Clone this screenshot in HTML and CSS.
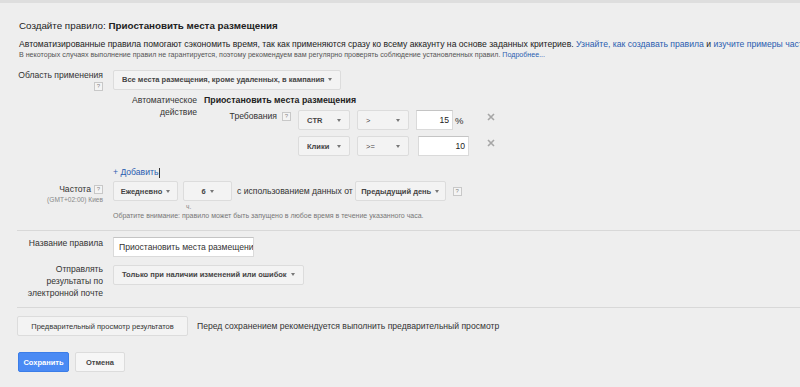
FILE: index.html
```html
<!DOCTYPE html>
<html lang="ru">
<head>
<meta charset="utf-8">
<link rel="stylesheet" href="styles.css">
</head>
<body>
<div class="page">
  <h1 class="title">Создайте правило: <b>Приостановить места размещения</b></h1>
  <p class="intro">Автоматизированные правила помогают сэкономить время, так как применяются сразу ко всему аккаунту на основе заданных критериев. <a>Узнайте, как создавать правила</a> и <a>изучите примеры часто используемых правил</a>.</p>
  <p class="note">В некоторых случаях выполнение правил не гарантируется, поэтому рекомендуем вам регулярно проверять соблюдение установленных правил. <a>Подробнее...</a></p>

  <div class="row scope">
    <div class="label">Область применения<span class="help">?</span></div>
    <div class="content">
      <span class="btn">Все места размещения, кроме удаленных, в кампания <i class="caret"></i></span>
    </div>
  </div>

  <div class="action">
    <div class="alabel">Автоматическое<br>действие</div>
    <div class="acontent">
      <div class="aname">Приостановить места размещения</div>
      <div class="reqs">
        <div class="rlabel">Требования<span class="help">?</span></div>
        <div class="rlist">
          <div class="cond">
            <span class="btn sel1">CTR <i class="caret"></i></span>
            <span class="btn sel2">&gt; <i class="caret"></i></span>
            <span class="input num short">15</span><span class="pct">%</span>
            <svg class="x" width="8" height="8" viewBox="0 0 8 8"><path d="M1 1L7 7M7 1L1 7" stroke="#a6a6a6" stroke-width="1.6"/></svg>
          </div>
          <div class="cond">
            <span class="btn sel1">Клики <i class="caret"></i></span>
            <span class="btn sel2">&gt;= <i class="caret"></i></span>
            <span class="input num long">10</span>
            <svg class="x" width="8" height="8" viewBox="0 0 8 8"><path d="M1 1L7 7M7 1L1 7" stroke="#a6a6a6" stroke-width="1.6"/></svg>
          </div>
        </div>
      </div>
    </div>
  </div>

  <div class="add"><a>+ Добавить</a><span class="cursor"></span></div>

  <div class="row freq">
    <div class="label"><span>Частота<span class="help inline">?</span></span><span class="tz">(GMT+02:00) Киев</span></div>
    <div class="content">
      <div class="freqline">
        <span class="btn daily">Ежедневно <i class="caret"></i></span>
        <span class="hourcol"><span class="btn hour">6 <i class="caret"></i></span><span class="hunit">ч.</span></span>
        <span class="using">с использованием данных от</span>
        <span class="btn prev">Предыдущий день <i class="caret"></i></span>
        <span class="help inline">?</span>
      </div>
      <div class="small">Обратите внимание: правило может быть запущено в любое время в течение указанного часа.</div>
    </div>
  </div>

  <hr class="sep first">

  <div class="row name">
    <div class="label">Название правила</div>
    <div class="content"><span class="input text"><span class="clip">Приостановить места размещения</span></span></div>
  </div>

  <div class="row mail">
    <div class="label wrap">Отправлять<br>результаты по<br>электронной почте</div>
    <div class="content"><span class="btn">Только при наличии изменений или ошибок <i class="caret"></i></span></div>
  </div>

  <hr class="sep second">

  <div class="preview">
    <span class="btn pbtn">Предварительный просмотр результатов</span>
    <span class="ptext">Перед сохранением рекомендуется выполнить предварительный просмотр</span>
  </div>

  <div class="actions">
    <span class="btn save">Сохранить</span>
    <span class="btn cancel">Отмена</span>
  </div>
</div>
</body>
</html>
```

FILE: styles.css
```css
html, body {
  margin: 0;
  padding: 0;
}
body {
  width: 800px;
  height: 387px;
  overflow: hidden;
  background: #eeeeee;
  font-family: "Liberation Sans", Arial, sans-serif;
  color: #222;
}
.page {
  border-top: 3px solid #dedede;
  height: 387px;
  padding: 0 0 0 19px;
  box-sizing: border-box;
  overflow: hidden;
  white-space: nowrap;
}
a {
  color: #2a5db0;
  cursor: pointer;
}
.title {
  margin: 17px 0 0;
  font-size: 9.8px;
  font-weight: normal;
  line-height: 12px;
  color: #222;
}
.title b {
  font-weight: bold;
}
.intro {
  margin: 6px 0 0;
  font-size: 8.65px;
  line-height: 12px;
  color: #222;
}
.note {
  margin: 0;
  font-size: 7.1px;
  line-height: 10px;
  color: #555;
}
.row {
  display: grid;
  grid-template-columns: 84px auto;
  column-gap: 10px;
}
.label {
  text-align: right;
  font-size: 8.6px;
  line-height: 11px;
  color: #333;
  display: flex;
  flex-direction: column;
  align-items: flex-end;
}
.help {
  display: inline-block;
  width: 7px;
  height: 7px;
  border: 1px solid #c8c8c8;
  background: #f4f4f4;
  color: #888;
  font-size: 6px;
  line-height: 7px;
  text-align: center;
  margin-top: 1px;
  font-weight: normal;
}
.help.inline {
  margin: 0 0 0 3px;
  vertical-align: middle;
}
.btn {
  display: inline-flex;
  align-items: center;
  height: 20px;
  box-sizing: border-box;
  padding: 0 8px;
  border: 1px solid #dcdcdc;
  background: #f3f3f3;
  border-radius: 2px;
  font-size: 7.5px;
  font-weight: bold;
  color: #444;
}
.caret {
  display: inline-block;
  width: 0;
  height: 0;
  border-left: 2.5px solid transparent;
  border-right: 2.5px solid transparent;
  border-top: 3px solid #777;
  margin-left: 4px;
}
.input {
  display: inline-flex;
  align-items: center;
  height: 20px;
  box-sizing: border-box;
  background: #fff;
  border: 1px solid #dadada;
  border-top-color: #c4c4c4;
  font-size: 8.6px;
  color: #222;
  overflow: hidden;
}
.scope {
  margin-top: 8px;
}
.scope .label {
  padding-top: 2px;
}
.action {
  display: grid;
  grid-template-columns: 178px auto;
  column-gap: 7px;
  margin-top: 3px;
}
.alabel {
  text-align: right;
  font-size: 8.6px;
  line-height: 12px;
  color: #333;
}
.aname {
  font-size: 8.8px;
  font-weight: bold;
  line-height: 12px;
  color: #222;
}
.reqs {
  display: grid;
  grid-template-columns: 87px auto;
  column-gap: 7px;
  margin-top: 4px;
}
.rlabel {
  font-size: 8.6px;
  line-height: 11px;
  text-align: right;
  padding-top: 1px;
  color: #333;
}
.rlabel .help {
  margin-left: 5px;
  vertical-align: top;
  margin-top: 1px;
}
.rlist {
  display: flex;
  flex-direction: column;
  gap: 6px;
}
.cond {
  display: flex;
  align-items: center;
}
.sel1 {
  width: 52px;
  justify-content: space-between;
  padding: 0 8px 0 8px;
}
.sel2 {
  width: 52px;
  margin-left: 7px;
  justify-content: space-between;
  padding: 0 8px 0 8px;
  font-weight: normal;
}
.num {
  justify-content: flex-end;
  padding-right: 3px;
  margin-left: 7px;
}
.num.short { width: 37px; }
.num.long { width: 51px; margin-left: 9px; }
.pct {
  font-size: 9.5px;
  margin-left: 2px;
  width: 20px;
  color: #333;
}
.x {
  display: block;
  margin-left: 12px;
  margin-top: -6px;
}
.num.long + .x {
  margin-left: 18px;
}
.add {
  margin: 10px 0 0 94px;
  font-size: 8.6px;
  line-height: 12px;
}
.add a {
  color: #2a5db0;
}
.cursor {
  display: inline-block;
  width: 1px;
  height: 10px;
  background: #333;
  vertical-align: middle;
  margin-left: 1px;
}
.freq {
  margin-top: 3px;
}
.freq .label {
  display: block;
  padding-top: 3px;
}
.freq .label .help.inline {
  vertical-align: top;
  margin-top: 1px;
}
.tz {
  display: block;
  font-size: 6.6px;
  color: #888;
  line-height: 8px;
  margin-top: 1px;
}
.freqline {
  display: flex;
  align-items: flex-start;
}
.daily {
  width: 65px;
  justify-content: center;
}
.hourcol {
  display: flex;
  flex-direction: column;
  margin-left: 5px;
}
.hour {
  width: 49px;
  justify-content: center;
}
.hunit {
  font-size: 6.6px;
  color: #888;
  margin: 2px 0 0 3px;
  line-height: 8px;
}
.using {
  font-size: 8.6px;
  color: #333;
  line-height: 20px;
  margin-left: 5px;
}
.prev {
  width: 91px;
  justify-content: center;
  margin-left: 2px;
}
.freqline .help.inline {
  margin: 6px 0 0 7px;
}
.small {
  font-size: 7px;
  color: #777;
  line-height: 8px;
  margin-top: 1px;
}
.sep {
  border: 0;
  border-top: 1px solid #d8d8d8;
  margin: 0 0 0 -2px;
}
.sep.first {
  margin-top: 10px;
}
.name {
  margin-top: 5px;
}
.name .label {
  padding-top: 2px;
}
.text {
  width: 141px;
  padding-left: 5px;
  color: #333;
}
.clip {
  display: block;
  overflow: hidden;
  width: 134px;
  white-space: nowrap;
}
.mail {
  margin-top: 6px;
}
.mail .label {
  line-height: 12px;
}
.mail .btn {
  margin-top: 1px;
}
.sep.second {
  margin-top: 8px;
}
.preview {
  display: flex;
  align-items: center;
  margin-top: 8px;
  margin-left: -2px;
}
.pbtn {
  width: 171px;
  justify-content: center;
  font-weight: normal;
  color: #333;
  padding: 0;
}
.ptext {
  font-size: 8.6px;
  color: #333;
  margin-left: 9px;
}
.actions {
  display: flex;
  gap: 6px;
  margin-top: 16px;
  margin-left: -1px;
}
.save {
  background: #4a8af4;
  border-color: #3b7de8;
  color: #fff;
  width: 51px;
  justify-content: center;
  padding: 0;
}
.cancel {
  background: #f6f6f6;
  width: 50px;
  justify-content: center;
  padding: 0;
}
```
